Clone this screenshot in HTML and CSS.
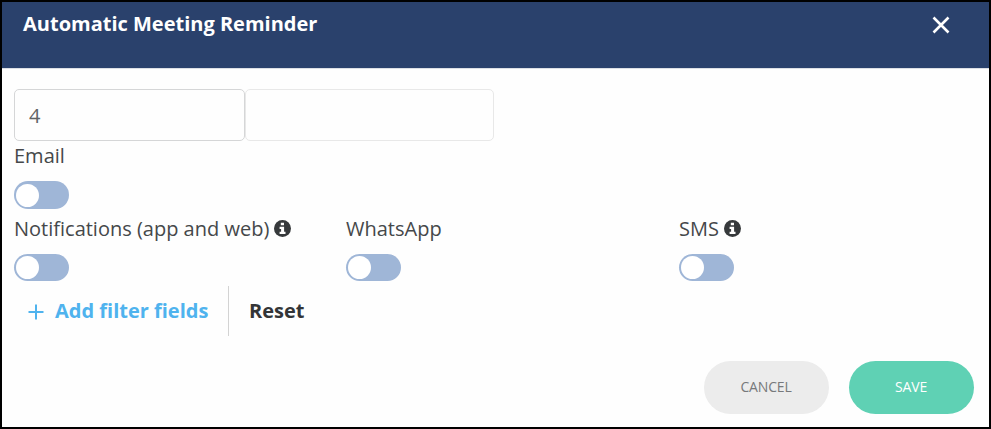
FILE: index.html
```html
<!DOCTYPE html>
<html lang="en">
<head>
  <meta charset="UTF-8">
  <meta name="viewport" content="width=device-width, initial-scale=1.0">
  <title>Automatic Meeting Reminder</title>
  <link rel="stylesheet" href="styles.css">
</head>
<body>
  <div class="modal">
    <div class="modal-header">
      <h1>Automatic Meeting Reminder</h1>
      <button type="button" class="close" aria-label="Close">
        <svg width="18" height="18" viewBox="0 0 18 18"><path d="M1.5 1.5l15 15M16.5 1.5l-15 15"/></svg>
      </button>
    </div>

    <form class="modal-body">
      <div class="fields">
        <input type="text" class="amount" value="4">
        <input type="text" class="unit">
      </div>

      <div class="channels">
        <div class="channel full">
          <span class="name">Email</span>
          <label class="switch"><input type="checkbox"><span class="knob"></span></label>
        </div>
        <div class="channel">
          <span class="name">Notifications (app and web)
            <svg class="info" viewBox="0 0 17 17"><circle cx="8.5" cy="8.5" r="8.5"/><path d="M6.8 2.7h3.2v2.5H6.8zM5.6 6.8h4.5v5h1.4v2.2H5.6v-2.2h1.5V9H5.6z"/></svg>
          </span>
          <label class="switch"><input type="checkbox"><span class="knob"></span></label>
        </div>
        <div class="channel">
          <span class="name">WhatsApp</span>
          <label class="switch"><input type="checkbox"><span class="knob"></span></label>
        </div>
        <div class="channel">
          <span class="name">SMS
            <svg class="info" viewBox="0 0 17 17"><circle cx="8.5" cy="8.5" r="8.5"/><path d="M6.8 2.7h3.2v2.5H6.8zM5.6 6.8h4.5v5h1.4v2.2H5.6v-2.2h1.5V9H5.6z"/></svg>
          </span>
          <label class="switch"><input type="checkbox"><span class="knob"></span></label>
        </div>
      </div>

      <div class="filters">
        <button type="button" class="add">
          <svg width="16" height="16" viewBox="0 0 16 16"><path d="M8 .5v15M.5 8h15"/></svg>
          Add filter fields
        </button>
        <button type="button" class="reset">Reset</button>
      </div>
    </form>

    <div class="modal-footer">
      <button type="button" class="btn cancel">CANCEL</button>
      <button type="button" class="btn save">SAVE</button>
    </div>
  </div>
</body>
</html>
```

FILE: styles.css
```css
* {
  box-sizing: border-box;
}
body {
  margin: 0;
  font-family: "Open Sans", sans-serif;
  font-size: 20px;
  color: #45484a;
}
button {
  padding: 0;
  border: 0;
  background: none;
  font-family: inherit;
  cursor: pointer;
}
.modal {
  display: flex;
  flex-direction: column;
  height: 429px;
  border: 2px solid #000;
  background: #fefefe;
}
.modal-header {
  display: flex;
  justify-content: space-between;
  align-items: flex-start;
  height: 67px;
  padding: 8px 39px 0 21px;
  background: #2a416c;
  border-bottom: 1px solid #dcdfe5;
}
.modal-header h1 {
  margin: 0;
  font-size: 20px;
  line-height: 28px;
  font-weight: 700;
  color: #fff;
}
.close {
  height: 18px;
  margin-top: 6px;
}
.close svg {
  display: block;
  fill: none;
  stroke: #fff;
  stroke-width: 2.6;
}
.modal-body {
  padding: 20px 12px 0;
}
.fields {
  display: flex;
}
.fields input {
  height: 52px;
  padding: 1px 14px 0;
  border: 1px solid #d5d6d7;
  border-radius: 5px;
  background: #fefefe;
  font-family: inherit;
  font-size: 20px;
  color: #606365;
}
.fields .amount {
  width: 231px;
}
.fields .unit {
  width: 249px;
  border-color: #e8e8e8;
}
.channels {
  display: grid;
  grid-template-columns: 332px 333px 1fr;
}
.channel {
  height: 73px;
}
.channel.full {
  grid-column: 1 / -1;
}
.name {
  display: flex;
  align-items: center;
  gap: 5px;
  height: 29px;
}
.info {
  width: 17px;
  height: 17px;
  fill: #36393b;
}
.info path {
  fill: #fff;
}
.switch {
  display: flex;
  align-items: center;
  width: 55px;
  height: 27px;
  margin-top: 11px;
  padding: 0 2px;
  border-radius: 14px;
  background: #9fb6d7;
  cursor: pointer;
}
.full .switch {
  height: 28px;
}
.switch input {
  display: none;
}
.knob {
  width: 23px;
  height: 23px;
  border-radius: 50%;
  background: #fff;
}
.switch input:checked + .knob {
  margin-left: auto;
}
.filters {
  display: flex;
  height: 50px;
  margin-top: -1px;
}
.filters button {
  padding-bottom: 1px;
  font-size: 20px;
  font-weight: 700;
}
.filters .add {
  display: flex;
  align-items: center;
  gap: 11px;
  width: 215px;
  padding-left: 14px;
  border-right: 1px solid #d3d3d3;
  color: #4fb3ee;
}
.add svg {
  margin-top: 2px;
  stroke: #4fb3ee;
  stroke-width: 2;
}
.filters .reset {
  padding-left: 20px;
  color: #333537;
}
.modal-footer {
  display: flex;
  justify-content: flex-end;
  gap: 20px;
  margin-top: auto;
  padding: 0 15px 13px 0;
}
.btn {
  width: 125px;
  height: 53px;
  padding: 0 1px 2px 0;
  border-radius: 27px;
  font-size: 14px;
  letter-spacing: -0.15px;
}
.cancel {
  background: #ececec;
  color: #77797b;
}
.save {
  background: #5fd1b4;
  color: #fff;
}
```
